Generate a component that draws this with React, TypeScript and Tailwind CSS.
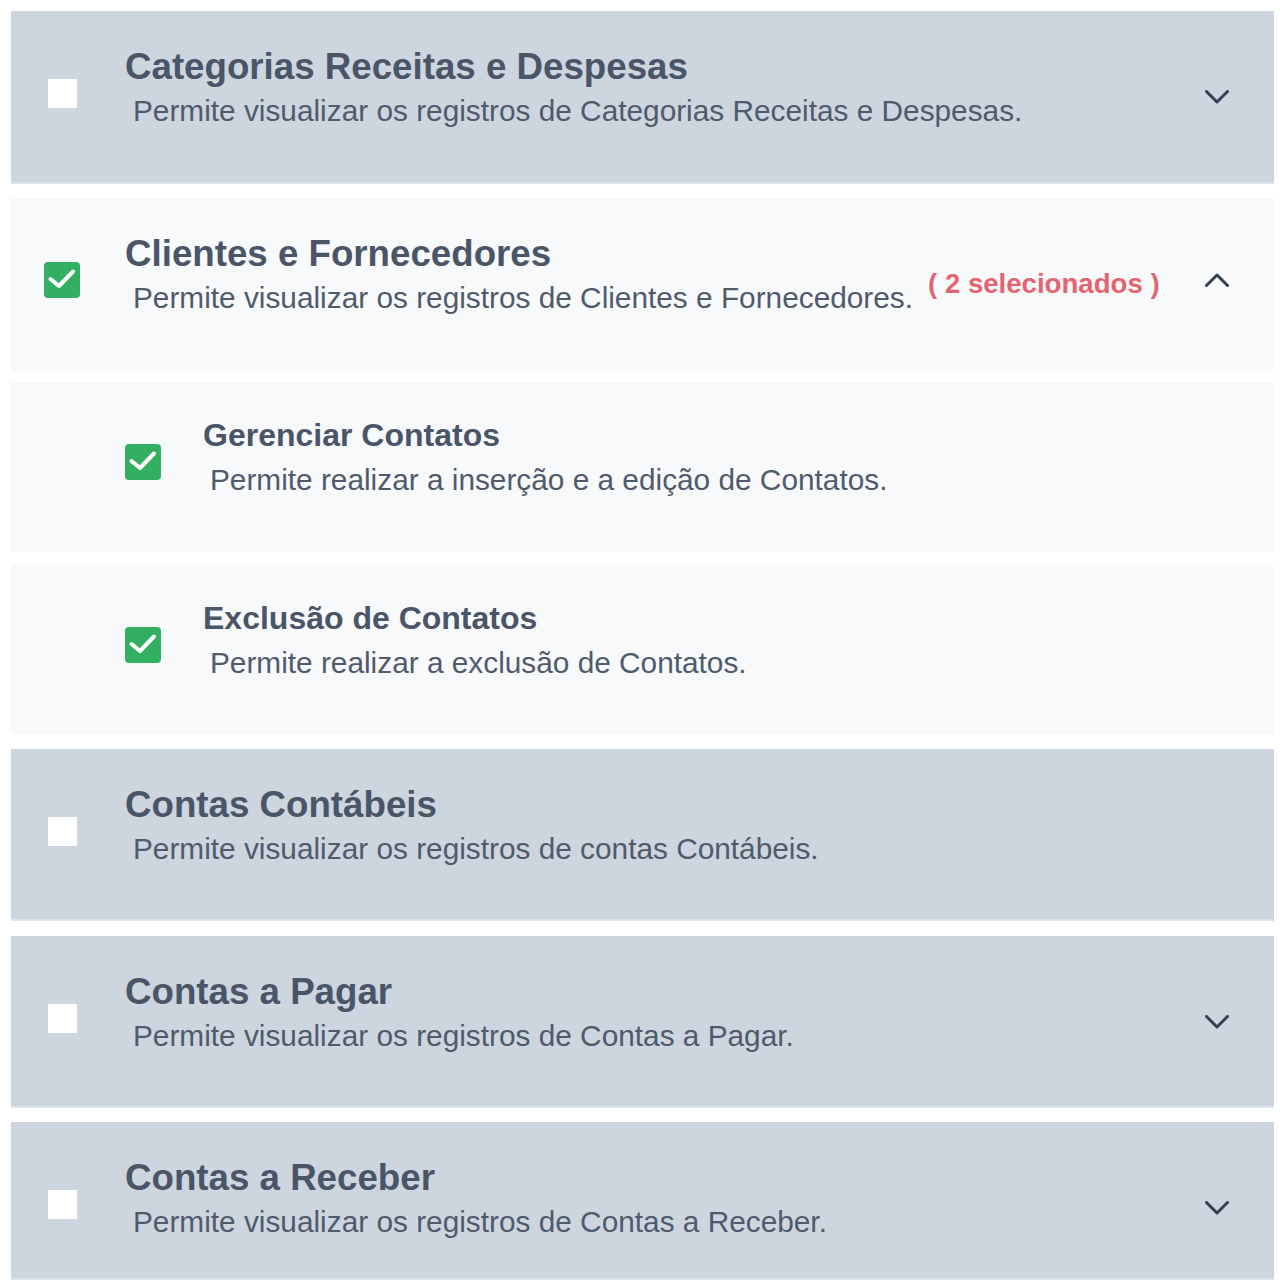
import React from 'react';

interface Permission {
  id: string;
  title: string;
  description: string;
  checked: boolean;
  level: 'main' | 'sub';
  chevron?: 'down' | 'up';
  selectedCount?: number;
  rowClass: string;
}

const permissions: Permission[] = [
  {
    id: 'categorias',
    title: 'Categorias Receitas e Despesas',
    description: 'Permite visualizar os registros de Categorias Receitas e Despesas.',
    checked: false,
    level: 'main',
    chevron: 'down',
    rowClass: 'h-[173px]',
  },
  {
    id: 'clientes',
    title: 'Clientes e Fornecedores',
    description: 'Permite visualizar os registros de Clientes e Fornecedores.',
    checked: true,
    level: 'main',
    chevron: 'up',
    selectedCount: 2,
    rowClass: 'mt-[14px] h-[173px]',
  },
  {
    id: 'gerenciar-contatos',
    title: 'Gerenciar Contatos',
    description: 'Permite realizar a inserção e a edição de Contatos.',
    checked: true,
    level: 'sub',
    rowClass: 'mt-[11px] h-[170px]',
  },
  {
    id: 'exclusao-contatos',
    title: 'Exclusão de Contatos',
    description: 'Permite realizar a exclusão de Contatos.',
    checked: true,
    level: 'sub',
    rowClass: 'mt-[13px] h-[169px]',
  },
  {
    id: 'contas-contabeis',
    title: 'Contas Contábeis',
    description: 'Permite visualizar os registros de contas Contábeis.',
    checked: false,
    level: 'main',
    rowClass: 'mt-[15px] h-[172px]',
  },
  {
    id: 'contas-pagar',
    title: 'Contas a Pagar',
    description: 'Permite visualizar os registros de Contas a Pagar.',
    checked: false,
    level: 'main',
    chevron: 'down',
    rowClass: 'mt-[15px] h-[172px]',
  },
  {
    id: 'contas-receber',
    title: 'Contas a Receber',
    description: 'Permite visualizar os registros de Contas a Receber.',
    checked: false,
    level: 'main',
    chevron: 'down',
    rowClass: 'mt-[14px] h-[158px]',
  },
];

function Checkbox({ checked }: { checked: boolean }) {
  return (
    <div className="flex h-[36px] w-[36px] shrink-0 items-center justify-center">
      {checked ? (
        <div className="flex h-[36px] w-[36px] items-center justify-center rounded-[4px] bg-[#33af61]">
          <svg width="36" height="36" viewBox="0 0 36 36" fill="none">
            <polyline
              points="6.5,17 15,24 29,9.5"
              stroke="#ffffff"
              strokeWidth="4"
              strokeLinecap="round"
              strokeLinejoin="round"
            />
          </svg>
        </div>
      ) : (
        <div className="h-[29px] w-[29px] bg-white" />
      )}
    </div>
  );
}

function Chevron({ direction }: { direction: 'down' | 'up' }) {
  return (
    <svg width="24" height="14" viewBox="0 0 24 14" fill="none">
      <polyline
        points={direction === 'down' ? '1.5,1.5 12,12 22.5,1.5' : '1.5,12.5 12,2 22.5,12.5'}
        stroke="#334155"
        strokeWidth="3"
        strokeLinecap="round"
        strokeLinejoin="round"
      />
    </svg>
  );
}

export default function App() {
  return (
    <div
      className="min-h-[1287px] bg-white pl-[11px] pr-[6px] pt-[11px]"
      style={{ fontFamily: '"Liberation Sans", Arial, sans-serif' }}
    >
      <div className="flex flex-col">
        {permissions.map((item) => {
          const isSub = item.level === 'sub';
          const bg = item.checked ? 'bg-[#f8f9fb]' : 'bg-[#cdd5df] border-b-2 border-[#dde3ea]';

          if (isSub) {
            return (
              <div key={item.id} className={`flex items-start pl-[114px] pt-[35px] ${bg} ${item.rowClass}`}>
                <div className="mt-[27px]">
                  <Checkbox checked={item.checked} />
                </div>
                <div className="ml-[42px]">
                  <div className="text-[32px] font-bold leading-[36px] text-[#4a5568]">{item.title}</div>
                  <div className="ml-[7px] mt-[10px] text-[29.8px] leading-[34px] text-[#4f5b6c]">
                    {item.description}
                  </div>
                </div>
              </div>
            );
          }

          return (
            <div key={item.id} className={`flex items-start pl-[33px] pr-[45px] pt-[36px] ${bg} ${item.rowClass}`}>
              <div className="mt-[28px]">
                <Checkbox checked={item.checked} />
              </div>
              <div className="ml-[45px]">
                <div className="text-[36.7px] font-bold leading-[40px] text-[#4a5568]">{item.title}</div>
                <div className="ml-[8px] mt-[7px] text-[29.8px] leading-[34px] text-[#4f5b6c]">
                  {item.description}
                </div>
              </div>
              {item.selectedCount !== undefined && (
                <div className="ml-[15px] mt-[34px] whitespace-nowrap text-[27.6px] font-bold leading-[32px] text-[#e2656f]">
                  ( {item.selectedCount} selecionados )
                </div>
              )}
              {item.chevron && (
                <div className={`ml-auto ${item.chevron === 'down' ? 'mt-[43px]' : 'mt-[39px]'}`}>
                  <Chevron direction={item.chevron} />
                </div>
              )}
            </div>
          );
        })}
      </div>
    </div>
  );
}
